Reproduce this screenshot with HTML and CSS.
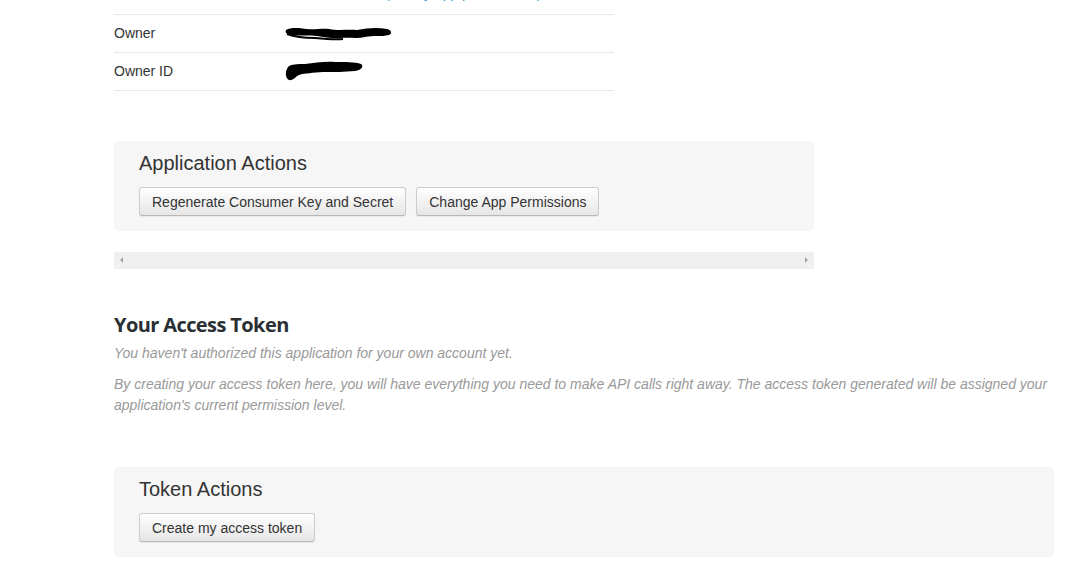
FILE: index.html
```html
<!DOCTYPE html>
<html>
<head>
<meta charset="utf-8">
<link rel="stylesheet" href="styles.css">
</head>
<body>
<div class="page">
  <div class="details">
    <div class="row top-row">
      <div class="label">Access level</div>
      <div class="value">Read and write <a class="link">(modify app permissions)</a></div>
    </div>
    <div class="row">
      <div class="label">Owner</div>
      <div class="value">
        <svg class="redact" width="108" height="16" viewBox="0 0 108 16">
          <path d="M1 5 C6 2 14 3 22 4 C30 5 36 3 44 4 C54 6 62 4 72 5 C82 3 92 2 102 4 C107 5 107 9 104 10 C96 12 88 10 80 12 C72 14 64 12 56 13 C48 14 40 12 32 11 C24 10 14 11 6 10 C1 9 0 7 1 5 Z" fill="#000"/>
          <path d="M2 9 C10 12 20 13 30 13 C40 14 50 15 58 14" stroke="#000" stroke-width="2" fill="none"/>
        </svg>
      </div>
    </div>
    <div class="row">
      <div class="label">Owner ID</div>
      <div class="value">
        <svg class="redact" width="80" height="22" viewBox="0 0 80 22">
          <path d="M3 7 C6 4 12 4 20 4 C30 3 40 1 50 2 C60 2 70 2 76 4 C79 6 77 10 70 11 C60 12 48 12 38 12 C28 13 20 13 14 15 C10 17 8 21 4 20 C0 18 0 11 3 7 Z" fill="#000"/>
        </svg>
      </div>
    </div>
  </div>

  <div class="panel panel-app">
    <h3 class="panel-title">Application Actions</h3>
    <div class="btn-row">
      <button class="btn">Regenerate Consumer Key and Secret</button>
      <button class="btn">Change App Permissions</button>
    </div>
  </div>

  <div class="hscroll">
    <span class="arrow arrow-left"></span>
    <span class="arrow arrow-right"></span>
  </div>

  <h2 class="section-title">Your Access Token</h2>
  <p class="note">You haven't authorized this application for your own account yet.</p>
  <p class="note">By creating your access token here, you will have everything you need to make API calls right away. The access token generated will be assigned your application's current permission level.</p>

  <div class="panel panel-token">
    <h3 class="panel-title">Token Actions</h3>
    <div class="btn-row">
      <button class="btn">Create my access token</button>
    </div>
  </div>
</div>
</body>
</html>
```

FILE: styles.css
```css
html, body {
  margin: 0;
  padding: 0;
  background: #fff;
}
body {
  font-family: "Liberation Sans", Arial, sans-serif;
  font-size: 14px;
  color: #333;
  overflow: hidden;
}
.page {
  margin-top: -23px;
  padding-left: 114px;
  width: 940px;
}
.details {
  width: 500px;
}
.row {
  display: flex;
  align-items: center;
  box-sizing: border-box;
  height: 38px;
  padding-bottom: 2px;
  border-bottom: 1px solid #e8e8e8;
}
.top-row {
  align-items: flex-end;
  padding-bottom: 13px;
  line-height: 16px;
}
.label {
  width: 171px;
}
.value {
  display: flex;
  align-items: center;
}
.top-row .value {
  display: block;
}
.link {
  color: #2a9fd6;
  margin-left: 2px;
}
.redact {
  display: block;
}
.panel {
  background: #f6f6f6;
  border-radius: 5px;
  box-sizing: border-box;
  height: 90px;
  padding: 9px 25px 0;
}
.panel-app {
  width: 700px;
  margin-top: 50px;
}
.panel-token {
  width: 940px;
  margin-top: 51px;
}
.panel-title {
  margin: 0;
  font-weight: normal;
  font-size: 20px;
  line-height: 26px;
  color: #333;
}
.btn-row {
  display: flex;
  gap: 10px;
  margin-top: 11px;
}
.btn {
  font-family: "Liberation Sans", Arial, sans-serif;
  font-size: 14px;
  color: #333;
  height: 29px;
  padding: 0 12px;
  border: 1px solid #ccc;
  border-bottom-color: #b8b8b8;
  border-radius: 3px;
  background: linear-gradient(#ffffff, #e6e6e6);
  box-shadow: 0 1px 1px rgba(0,0,0,0.06);
}
.hscroll {
  width: 700px;
  height: 17px;
  margin-top: 21px;
  background: #f0f0f0;
  position: relative;
}
.arrow {
  position: absolute;
  top: 5px;
  width: 0;
  height: 0;
  border-top: 3px solid transparent;
  border-bottom: 3px solid transparent;
}
.arrow-left {
  left: 6px;
  border-right: 3px solid #a3a3a3;
}
.arrow-right {
  right: 6px;
  border-left: 3px solid #a3a3a3;
}
.section-title {
  margin: 43px 0 0;
  font-family: "Open Sans", "DejaVu Sans", sans-serif;
  font-weight: 700;
  font-size: 20px;
  line-height: 26px;
  color: #292f33;
  letter-spacing: -0.6px;
}
.note {
  margin: 5px 0 0;
  font-style: italic;
  color: #999;
  line-height: 21px;
}
.note + .note {
  margin-top: 10px;
}
```
